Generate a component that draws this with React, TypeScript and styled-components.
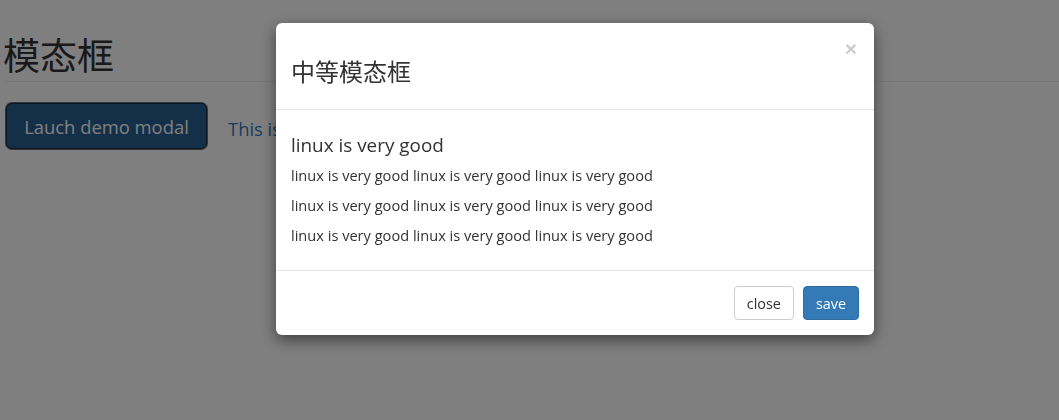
import React from "react";
import styled, { createGlobalStyle } from "styled-components";

const Global = createGlobalStyle`
  html, body { margin: 0; padding: 0; background: #fff; }
  body {
    font-family: "Open Sans", "Noto Sans CJK SC", sans-serif;
    font-size: 14px;
    line-height: 20px;
    color: #333;
    overflow: hidden;
    height: 420px;
  }
  * { box-sizing: border-box; }
`;

const Page = styled.div`
  padding: 34px 0 0 5px;
  width: 1059px;
  height: 420px;
`;

const PageHeader = styled.div`
  border-bottom: 1px solid #eee;
  padding-bottom: 7px;
`;

const PageTitle = styled.h1`
  margin: 0 0 0 -2px;
  font-family: "Noto Sans CJK SC", sans-serif;
  font-weight: 400;
  font-size: 37px;
  line-height: 40px;
  color: #333;
`;

const Row = styled.div`
  display: flex;
  align-items: center;
  gap: 21px;
  margin-top: 21px;
  padding-left: 1px;
`;

const LargeButton = styled.button`
  font-family: "Open Sans", "Noto Sans CJK SC", sans-serif;
  height: 46px;
  width: 201px;
  padding: 0 16px;
  font-size: 18.4px;
  color: #fff;
  background: #286090;
  border: 1px solid #122e46;
  border-radius: 6px;
  box-shadow: 0 0 0 1px #6a6a6a;
`;

const LinkText = styled.a`
  font-size: 18.4px;
  color: #337ab7;
  text-decoration: none;
  margin-top: 6px;
`;

const Backdrop = styled.div`
  position: fixed;
  inset: 0;
  background: rgba(0, 0, 0, 0.5);
`;

const Dialog = styled.div`
  position: fixed;
  top: 23px;
  left: 276px;
  width: 598px;
  background: #fff;
  border-radius: 6px;
  box-shadow: 0 5px 15px rgba(0, 0, 0, 0.5);
`;

const Header = styled.div`
  padding: 15px;
  border-bottom: 1px solid #e5e5e5;
  display: flex;
  justify-content: space-between;
  align-items: flex-start;
`;

const Title = styled.h3`
  margin: 20px 0 10px;
  font-family: "Noto Sans CJK SC", sans-serif;
  font-weight: 400;
  font-size: 24px;
  line-height: 26px;
  color: #333;
`;

const CloseX = styled.span`
  font-family: "Liberation Sans", sans-serif;
  font-size: 21px;
  font-weight: 700;
  line-height: 1;
  color: #000;
  opacity: 0.2;
  margin-right: 2px;
`;

const Body = styled.div`
  padding: 15px;
`;

const SubTitle = styled.h4`
  margin: 10px 0;
  font-size: 18.9px;
  font-weight: 400;
  line-height: 20px;
  color: #333;
`;

const Para = styled.p`
  margin: 0 0 10px;
  font-size: 14.6px;
`;

const Footer = styled.div`
  padding: 15px;
  border-top: 1px solid #e5e5e5;
  display: flex;
  justify-content: flex-end;
  gap: 9px;
`;

const Btn = styled.button<{ $primary?: boolean }>`
  font-family: "Open Sans", "Noto Sans CJK SC", sans-serif;
  height: 34px;
  padding: 0 12px;
  font-size: 14.4px;
  border-radius: 4px;
  border: 1px solid ${(p) => (p.$primary ? "#2e6da4" : "#ccc")};
  background: ${(p) => (p.$primary ? "#337ab7" : "#fff")};
  color: ${(p) => (p.$primary ? "#fff" : "#333")};
`;

const line = "linux is very good linux is very good linux is very good";

export default function App() {
  return (
    <>
      <Global />
      <Page>
        <PageHeader>
          <PageTitle>模态框</PageTitle>
        </PageHeader>
        <Row>
          <LargeButton>Lauch demo modal</LargeButton>
          <LinkText href="#">This is</LinkText>
        </Row>
      </Page>
      <Backdrop />
      <Dialog>
        <Header>
          <Title>中等模态框</Title>
          <CloseX>×</CloseX>
        </Header>
        <Body>
          <SubTitle>linux is very good</SubTitle>
          <Para>{line}</Para>
          <Para>{line}</Para>
          <Para>{line}</Para>
        </Body>
        <Footer>
          <Btn>close</Btn>
          <Btn $primary>save</Btn>
        </Footer>
      </Dialog>
    </>
  );
}
